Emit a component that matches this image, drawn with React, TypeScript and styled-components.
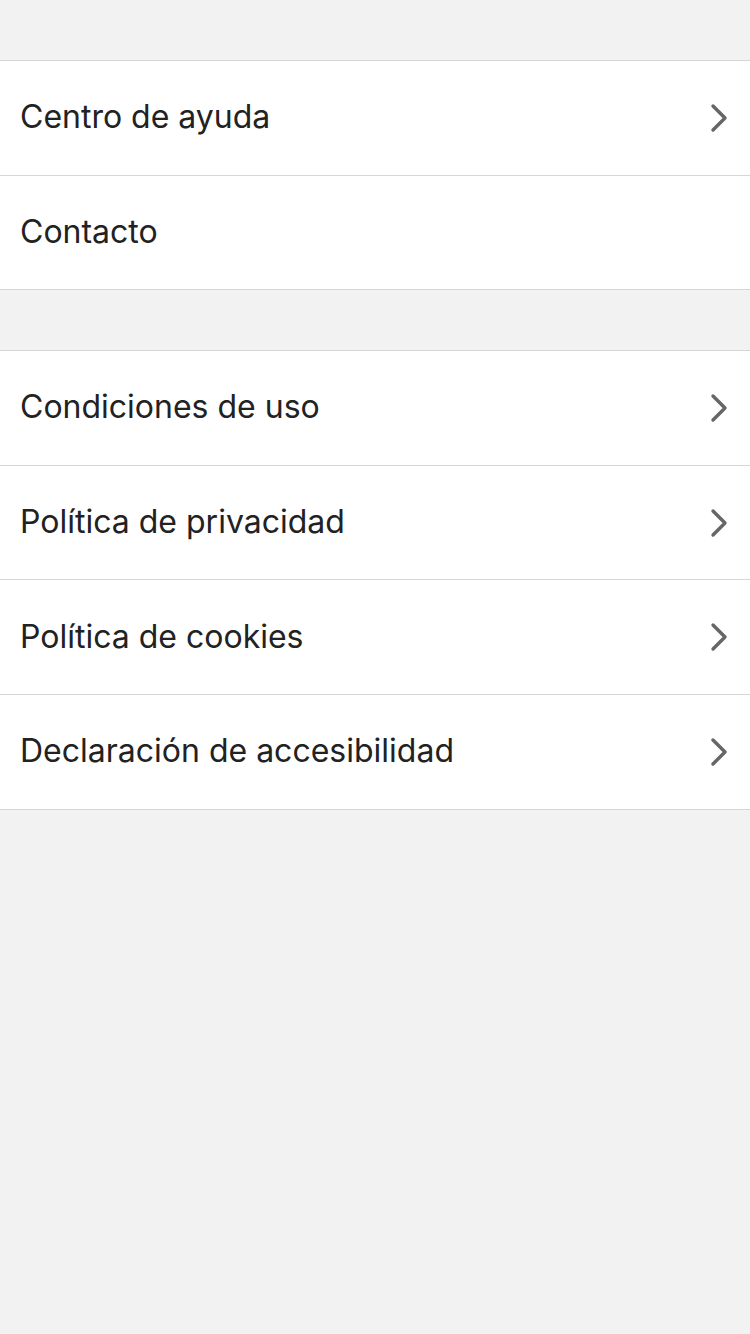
import React from "react";
import styled, { createGlobalStyle } from "styled-components";

const Global = createGlobalStyle`
  html, body { margin: 0; padding: 0; background: #f2f2f2; }
  body { font-family: Inter, "Noto Sans", sans-serif; }
`;

const Page = styled.div`
  min-height: 1334px;
  background: #f2f2f2;
  padding-top: 60px;
  display: flex;
  flex-direction: column;
  gap: 60px;
`;

const Group = styled.div`
  background: #ffffff;
  border-top: 1px solid #d6d6d6;
  display: flex;
  flex-direction: column;
`;

const Row = styled.div`
  height: 113.6px;
  border-bottom: 1px solid #d6d6d6;
  display: flex;
  align-items: center;
  justify-content: space-between;
  padding: 0 22px 0 21px;
`;

const Label = styled.span`
  font-size: 32px;
  color: #222222;
  letter-spacing: 0;
  margin-left: -1px;
  margin-top: -2px;
`;

const Chevron = () => (
  <svg width="18" height="30" viewBox="0 0 18 30" fill="none">
    <path d="M3 3 L15 15 L3 27" stroke="#666666" strokeWidth="3.4" strokeLinecap="round" strokeLinejoin="round" />
  </svg>
);

const groups = [
  [
    { label: "Centro de ayuda", arrow: true },
    { label: "Contacto", arrow: false },
  ],
  [
    { label: "Condiciones de uso", arrow: true },
    { label: "Política de privacidad", arrow: true },
    { label: "Política de cookies", arrow: true },
    { label: "Declaración de accesibilidad", arrow: true },
  ],
];

export default function App() {
  return (
    <>
      <Global />
      <Page>
        {groups.map((g, i) => (
          <Group key={i}>
            {g.map((r) => (
              <Row key={r.label}>
                <Label>{r.label}</Label>
                {r.arrow && <Chevron />}
              </Row>
            ))}
          </Group>
        ))}
      </Page>
    </>
  );
}
